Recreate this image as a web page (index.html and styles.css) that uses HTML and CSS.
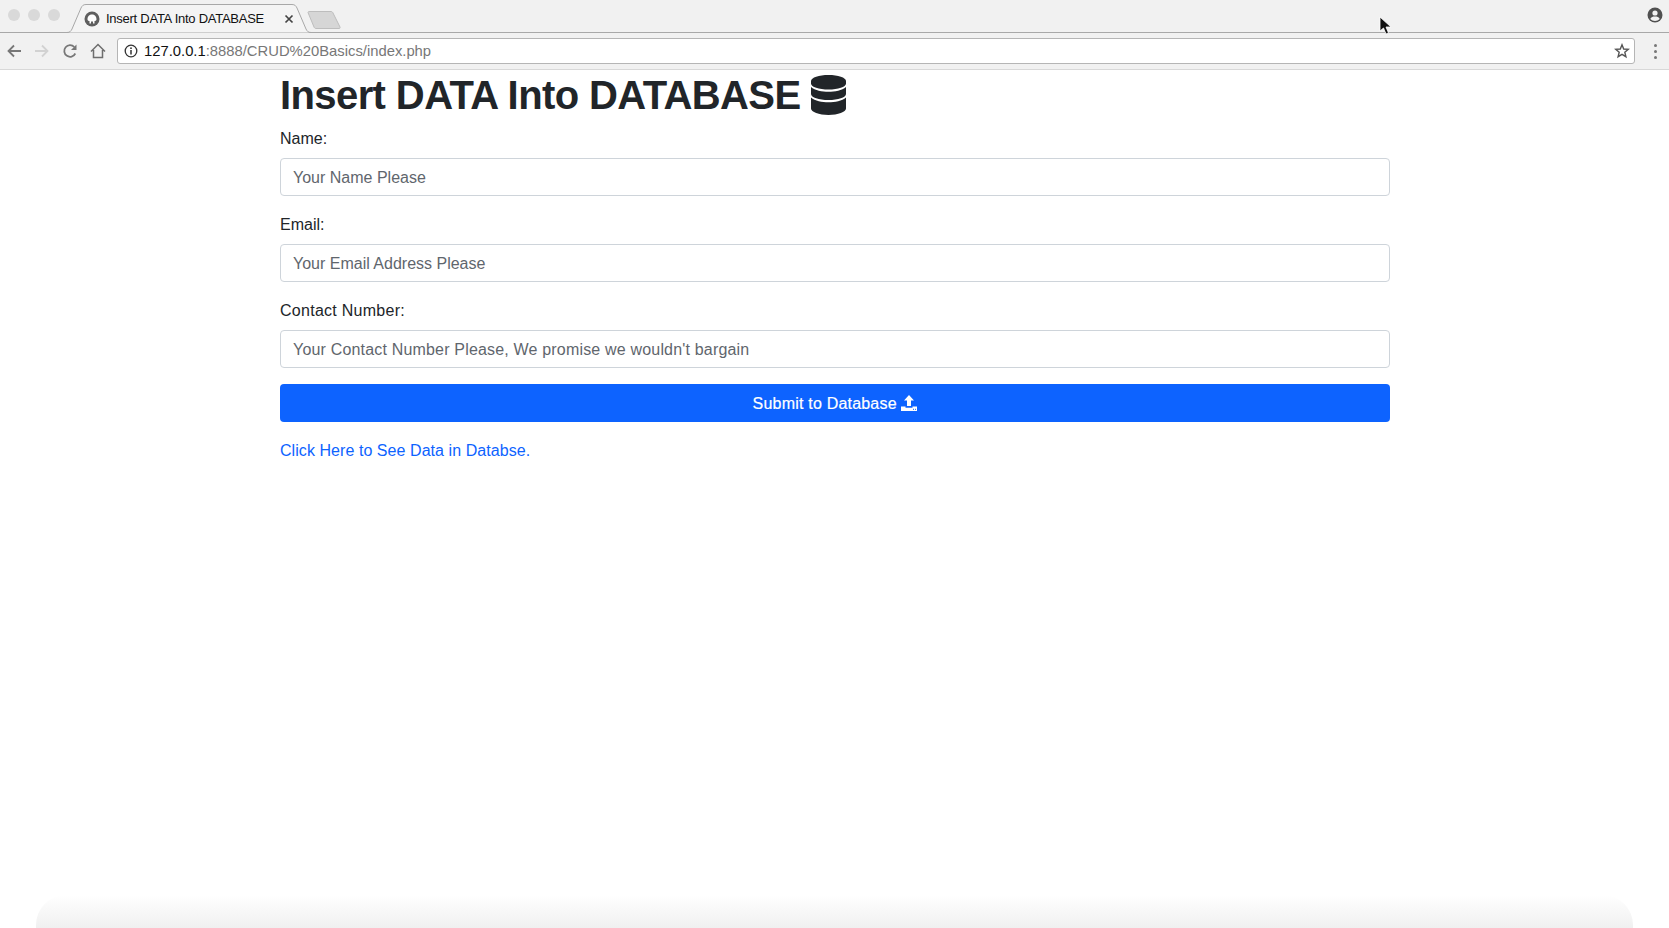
FILE: index.html
```html
<!DOCTYPE html>
<html lang="en">
<head>
  <meta charset="UTF-8" />
  <title>Insert DATA Into DATABASE</title>
  <link rel="stylesheet" href="styles.css">
</head>
<body>

  <div class="chrome">
    <div class="tabstrip">
      <div class="dots">
        <span class="dot"></span>
        <span class="dot"></span>
        <span class="dot"></span>
      </div>
      <div class="tab">
        <svg class="tab-shape" width="248" height="29" viewBox="0 0 248 29">
          <path d="M0 28.5 H2 C5 28.5 6 27 7 25 L16 4 C17 2 18 .5 21 .5 H227 C230 .5 231 2 232 4 L241 25 C242 27 243 28.5 246 28.5 H248" fill="#f4f4f4" stroke="#a8a8a8"/>
        </svg>
        <svg class="favicon" width="16" height="16" viewBox="0 0 16 16">
          <circle cx="8" cy="8" r="7.5" fill="#5f5f5f"/>
          <path d="M3.5 8.5 C3.5 5 5.5 3.5 8 3.5 S12.5 5 12.5 8.5 C12.5 10 11 10 10.5 10 V12.5 H9 V10.5 H7 V12.5 H5.5 V10 C5 10 3.5 10 3.5 8.5Z" fill="#fff"/>
        </svg>
        <span class="tab-title">Insert DATA Into DATABASE</span>
        <svg class="tab-close" width="10" height="10" viewBox="0 0 10 10">
          <path d="M1.5 1.5 L8.5 8.5 M8.5 1.5 L1.5 8.5" stroke="#444" stroke-width="1.7"/>
        </svg>
      </div>
      <svg class="new-tab" width="34" height="18" viewBox="0 0 34 18">
        <path d="M1 1.5 C1 1 1.500 .5 2 .5 H24 C25 .5 25.500 1 26 2 L33 16 C33.300 17 33 17.500 32 17.500 H9 C8 17.500 7.500 17 7 16 Z" fill="#d6d6d6" stroke="#bdbdbd"/>
      </svg>
      <svg class="profile" width="16" height="16" viewBox="0 0 16 16">
        <circle cx="8" cy="8" r="7.500" fill="#505050"/>
        <circle cx="8" cy="6" r="2.600" fill="#f2f2f2"/>
        <path d="M3.300 12 C4 9.800 6 9.500 8 9.500 S12 9.800 12.700 12 C11.500 13.300 9.800 14 8 14 S4.500 13.300 3.300 12Z" fill="#f2f2f2"/>
      </svg>
    </div>

    <div class="toolbar">
      <svg class="tool" width="16" height="16" viewBox="0 0 16 16">
        <path d="M15 8 H3 M8 2.500 L2.500 8 L8 13.500" fill="none" stroke="#777" stroke-width="1.800"/>
      </svg>
      <svg class="tool" width="16" height="16" viewBox="0 0 16 16">
        <path d="M1 8 H13 M8 2.500 L13.500 8 L8 13.500" fill="none" stroke="#d2d2d2" stroke-width="1.800"/>
      </svg>
      <svg class="tool" width="16" height="16" viewBox="0 0 16 16">
        <path d="M13.300 10.500 A5.800 5.800 0 1 1 12.300 4" fill="none" stroke="#777" stroke-width="1.800"/>
        <path d="M14.500 1.500 V7 H9 Z" fill="#777"/>
      </svg>
      <svg class="tool" width="16" height="16" viewBox="0 0 16 16">
        <path d="M1 8.500 L8 1.500 L15 8.500 M3.500 7 V14.500 H12.500 V7" fill="none" stroke="#6e6e6e" stroke-width="1.500"/>
      </svg>
      <div class="omnibox">
        <svg class="info" width="14" height="14" viewBox="0 0 14 14">
          <circle cx="7" cy="7" r="5.800" fill="none" stroke="#333" stroke-width="1.300"/>
          <path d="M7 6 V10.500" stroke="#333" stroke-width="1.500"/>
          <circle cx="7" cy="4.200" r=".9" fill="#333"/>
        </svg>
        <span class="url"><span class="host">127.0.0.1</span>:8888/CRUD%20Basics/index.php</span>
        <svg class="star" width="16" height="16" viewBox="0 0 16 16">
          <path d="M8 1.800 L9.700 6 L14.300 6.300 L10.800 9.200 L11.900 13.700 L8 11.300 L4.100 13.700 L5.200 9.200 L1.700 6.300 L6.300 6 Z" fill="none" stroke="#555" stroke-width="1.400"/>
        </svg>
      </div>
      <div class="menu-dots">
        <span></span>
        <span></span>
        <span></span>
      </div>
    </div>
  </div>

  <div class="container">
    <h1>Insert DATA Into DATABASE
      <svg class="db-icon" width="35" height="40" viewBox="0 0 35 40">
        <path d="M17.500 0 C27 0 35 2.600 35 6 V8.500 C35 12 27 14.500 17.500 14.500 S0 12 0 8.500 V6 C0 2.600 8 0 17.500 0Z" fill="#212529"/>
        <path d="M0 12 C4 15.500 11 16.800 17.500 16.800 S31 15.500 35 12 V19 C35 22.500 27 25 17.500 25 S0 22.500 0 19Z" fill="#212529"/>
        <path d="M0 22.500 C4 26 11 27.300 17.500 27.300 S31 26 35 22.500 V33.500 C35 37 27 40 17.500 40 S0 37 0 33.500Z" fill="#212529"/>
      </svg>
    </h1>

    <form>
      <div class="form-group">
        <label for="name">Name:</label>
        <input type="text" id="name" class="form-control" placeholder="Your Name Please" />
      </div>
      <div class="form-group">
        <label for="email">Email:</label>
        <input type="text" id="email" class="form-control" placeholder="Your Email Address Please" />
      </div>
      <div class="form-group">
        <label for="contact" class="wide">Contact Number:</label>
        <input type="text" id="contact" class="form-control wide-input" placeholder="Your Contact Number Please, We promise we wouldn't bargain" />
      </div>
      <button type="button" class="btn-submit">Submit to Database
        <svg class="upload-icon" width="16" height="16" viewBox="0 0 16 16">
          <path d="M8 0 L13 5.500 H10 V11 H6 V5.500 H3 Z" fill="#fff"/>
          <path d="M0 11.500 H4.500 V12.800 H11.500 V11.500 H16 V16 H0 Z" fill="#fff"/>
          <rect x="12" y="13.800" width="1" height="1" fill="#0d63ff"/>
          <rect x="14" y="13.800" width="1" height="1" fill="#0d63ff"/>
        </svg>
      </button>
    </form>

    <p class="see-data"><a href="#">Click Here to See Data in Databse.</a></p>
  </div>

  <div class="bottom-fade"></div>

  <svg class="cursor" width="14" height="20" viewBox="0 0 14 20">
    <path d="M1 1 L1 15 L4.500 12 L7 18 L9.500 17 L7 11 L12 11 Z" fill="#111" stroke="#fff" stroke-width=".8"/>
  </svg>

</body>
</html>
```

FILE: styles.css
```css
* {
  box-sizing: border-box;
}

body {
  margin: 0;
  background: #fff;
  color: #212529;
  font-family: "Liberation Sans", Arial, sans-serif;
  font-size: 16px;
  line-height: 1.5;
  height: 928px;
  overflow: hidden;
}

/* browser chrome */
.chrome {
  height: 70px;
  background: #f1f1f1;
  border-bottom: 1px solid #d8d8d8;
}

.tabstrip {
  height: 33px;
  display: flex;
  align-items: flex-start;
  border-bottom: 1px solid #a8a8a8;
  position: relative;
}

.dots {
  display: flex;
  gap: 8px;
  padding: 9px 0 0 8px;
  width: 65px;
}

.dot {
  width: 12px;
  height: 12px;
  border-radius: 50%;
  background: #d9d9d9;
}

.tab {
  position: relative;
  width: 248px;
  height: 29px;
  margin-top: 4px;
  display: flex;
  align-items: center;
  padding: 0 0 0 19px;
  z-index: 1;
}

.tab-shape {
  position: absolute;
  left: 0;
  top: 0;
}

.favicon,
.tab-title,
.tab-close {
  position: relative;
}

.tab-title {
  margin-left: 6px;
  font-size: 13px;
  letter-spacing: -.26px;
  color: #111;
  white-space: nowrap;
  width: 171px;
}

.tab-close {
  margin-left: 7px;
}

.new-tab {
  margin: 11px 0 0 -6px;
}

.profile {
  margin: 7px 6px 0 auto;
}

.toolbar {
  height: 36px;
  display: flex;
  align-items: center;
  padding: 0 0 0 6px;
}

.tool {
  margin-right: 12px;
  flex: none;
}

.omnibox {
  width: 1518px;
  height: 26px;
  margin-left: -1px;
  background: #fff;
  border: 1px solid #b5b5b5;
  border-radius: 3px;
  display: flex;
  align-items: center;
  padding: 0 4px 0 6px;
}

.info {
  flex: none;
}

.url {
  margin-left: 6px;
  font-size: 14.800px;
  color: #777;
}

.host {
  color: #111;
}

.star {
  margin-left: auto;
}

.menu-dots {
  display: flex;
  flex-direction: column;
  gap: 3px;
  margin-left: 19px;
}

.menu-dots span {
  width: 3px;
  height: 3px;
  border-radius: 50%;
  background: #777;
}

/* page */
.container {
  width: 1110px;
  margin-left: 280px;
}

h1 {
  margin: 0 0 8px;
  padding-top: 1px;
  font-size: 40px;
  font-weight: 700;
  letter-spacing: -.6px;
  line-height: 48px;
  height: 48px;
  white-space: nowrap;
}

.db-icon {
  vertical-align: -6px;
}

.form-group {
  margin-bottom: 16px;
}

label {
  display: block;
  padding-top: 1px;
  margin-bottom: 7px;
}

.wide {
  letter-spacing: .27px;
}

.form-control {
  display: block;
  width: 100%;
  height: 38px;
  padding: 7px 12px 5px;
  font-family: inherit;
  font-size: 16px;
  color: #495057;
  background: #fff;
  border: 1px solid #ced4da;
  border-radius: 4px;
}

.wide-input {
  letter-spacing: .18px;
}

.form-control::placeholder {
  color: #5f666d;
  opacity: 1;
}

.btn-submit {
  display: block;
  width: 100%;
  height: 38px;
  padding: 2px 0 0;
  font-family: inherit;
  font-size: 16px;
  font-weight: 400;
  letter-spacing: .2px;
  color: #fff;
  background: #0d63ff;
  border: none;
  border-radius: 4px;
  -webkit-text-stroke: .2px #fff;
}

.upload-icon {
  vertical-align: -2px;
}

.see-data {
  margin: 16px 0 0;
  padding-top: 1px;
  letter-spacing: .06px;
}

.see-data a {
  color: #0d63ff;
  text-decoration: none;
}

.bottom-fade {
  position: absolute;
  left: 36px;
  right: 36px;
  bottom: 0;
  height: 33px;
  background: linear-gradient(#ffffff00, #f0f0f0);
  border-radius: 30px 30px 0 0;
}

.cursor {
  position: absolute;
  left: 1379px;
  top: 16px;
}
```
